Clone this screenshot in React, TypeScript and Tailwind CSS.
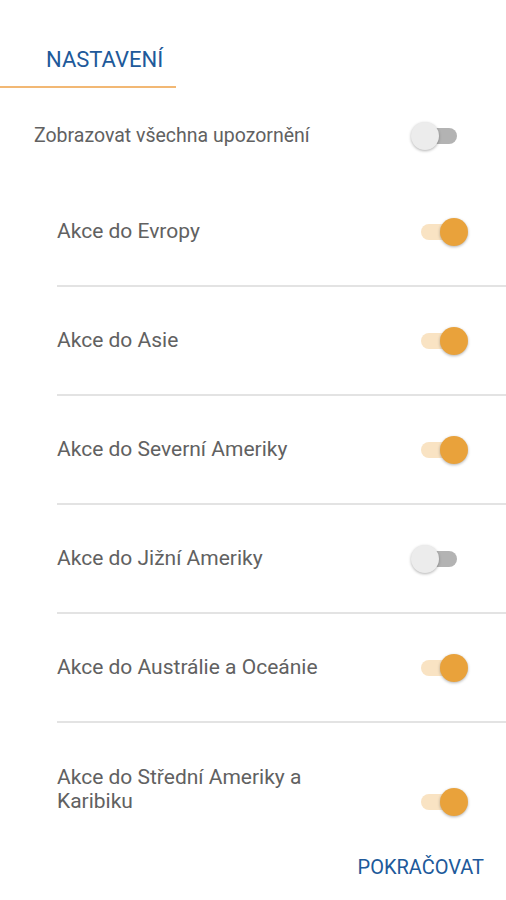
import React, { useState } from 'react';

interface Region {
  id: string;
  label: React.ReactNode;
  on: boolean;
}

const initialRegions: Region[] = [
  { id: 'eu', label: 'Akce do Evropy', on: true },
  { id: 'as', label: 'Akce do Asie', on: true },
  { id: 'na', label: 'Akce do Severní Ameriky', on: true },
  { id: 'sa', label: 'Akce do Jižní Ameriky', on: false },
  { id: 'au', label: 'Akce do Austrálie a Oceánie', on: true },
];

function Toggle({ on, onClick, className = '' }: { on: boolean; onClick: () => void; className?: string }) {
  return (
    <button onClick={onClick} className={`relative w-[58px] h-[30px] shrink-0 ${className}`}>
      {on ? (
        <>
          <span className="absolute left-[10px] top-[7px] w-[33px] h-[16px] rounded-full bg-[#f9e3c3]" />
          <span className="absolute left-[29px] top-[1px] w-[28px] h-[28px] rounded-full bg-[#e9a23b] shadow-[0_1px_3px_rgba(0,0,0,0.3)]" />
        </>
      ) : (
        <>
          <span className="absolute left-[13px] top-[7px] w-[33px] h-[16px] rounded-full bg-[#b3b3b3]" />
          <span className="absolute left-0 top-[1px] w-[28px] h-[28px] rounded-full bg-[#ececec] shadow-[0_1px_3px_rgba(0,0,0,0.3)]" />
        </>
      )}
    </button>
  );
}

export default function App() {
  const [all, setAll] = useState(false);
  const [regions, setRegions] = useState(initialRegions);
  const [caribbean, setCaribbean] = useState(true);

  const flip = (id: string) =>
    setRegions(rs => rs.map(r => (r.id === id ? { ...r, on: !r.on } : r)));

  return (
    <div className="w-[506px] min-h-[900px] bg-white font-['Roboto','Liberation_Sans',sans-serif] text-[#616161]">
      {/* tab */}
      <div className="w-[176px] pl-[46px] pt-[47px] pb-[13px] border-b-2 border-[#f2b874]">
        <span className="block text-[22px] leading-[26px] text-[#20599a]">NASTAVENÍ</span>
      </div>

      {/* master switch */}
      <div className="h-[90px] pt-[6px] flex items-center justify-between pl-[34px] pr-[37px]">
        <span className="text-[19.5px]">Zobrazovat všechna upozornění</span>
        <Toggle on={all} onClick={() => setAll(!all)} />
      </div>

      {/* regions */}
      <div className="pl-[57px]">
        {regions.map(r => (
          <div key={r.id} className="border-b-2 border-[#e3e3e3]">
            <div className="h-[107px] flex items-center justify-between pr-[37px]">
              <span className="text-[21px]">{r.label}</span>
              <Toggle on={r.on} onClick={() => flip(r.id)} />
            </div>
          </div>
        ))}
        <div className="pt-[42px] flex items-end justify-between pr-[37px]">
          <span className="text-[21px] leading-[24px]">
            Akce do Střední Ameriky a
            <br />
            Karibiku
          </span>
          <Toggle on={caribbean} onClick={() => setCaribbean(!caribbean)} className="-mb-[4px]" />
        </div>
      </div>

      {/* footer */}
      <div className="flex justify-end pr-[22px] pt-[43px]">
        <button className="text-[20px] leading-[22px] text-[#20599a]">POKRAČOVAT</button>
      </div>
    </div>
  );
}
